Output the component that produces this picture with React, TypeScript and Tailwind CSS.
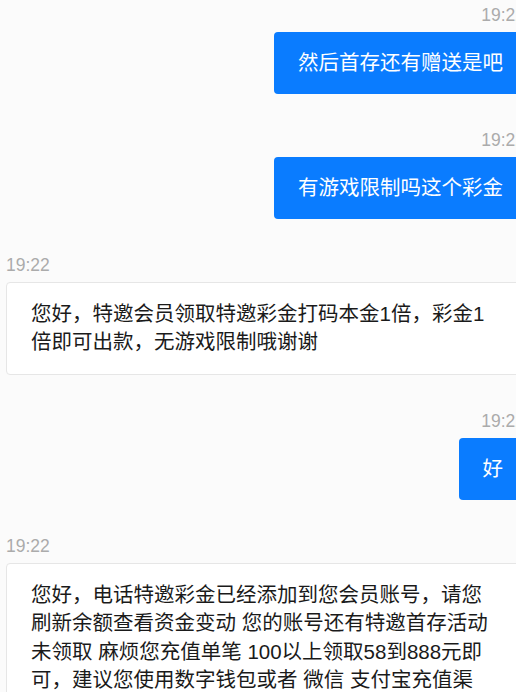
import React from "react";

const font = {
  fontFamily: '"Liberation Sans", "Noto Sans CJK SC", sans-serif',
};

function Time({ side }: { side: "left" | "right" }) {
  return (
    <div
      className={`text-[17.5px] leading-[20px] text-[#ababab] mb-[7px] ${
        side === "right" ? "text-right mr-[2px]" : "text-left"
      }`}
    >
      19:22
    </div>
  );
}

function Right({ text }: { text: string }) {
  return (
    <div className="flex flex-col items-end">
      <Time side="right" />
      <div className="bg-[#0a7cff] text-white rounded-[4px] px-[24px] py-[17px] text-[20.5px] leading-[28px]">
        {text}
      </div>
    </div>
  );
}

function Left({ text }: { text: string }) {
  return (
    <div className="flex flex-col items-start">
      <Time side="left" />
      <div className="bg-white border border-[#e6e6e6] text-[#1a1a1a] rounded-[4px] px-[24px] py-[17px] text-[20.5px] leading-[28.5px] max-w-[514px]">
        {text}
      </div>
    </div>
  );
}

export default function App() {
  return (
    <div
      className="w-[516px] h-[692px] overflow-hidden bg-[#fbfbfb]"
      style={font}
    >
      <div className="w-[533px] px-[6px] pt-[4.5px] flex flex-col gap-[36px]">
        <Right text="然后首存还有赠送是吧" />
        <Right text="有游戏限制吗这个彩金" />
        <Left text="您好，特邀会员领取特邀彩金打码本金1倍，彩金1倍即可出款，无游戏限制哦谢谢" />
        <Right text="好" />
        <Left text="您好，电话特邀彩金已经添加到您会员账号，请您刷新余额查看资金变动 您的账号还有特邀首存活动未领取 麻烦您充值单笔 100以上领取58到888元即可，建议您使用数字钱包或者 微信 支付宝充值渠道，到账更快哦" />
      </div>
    </div>
  );
}
